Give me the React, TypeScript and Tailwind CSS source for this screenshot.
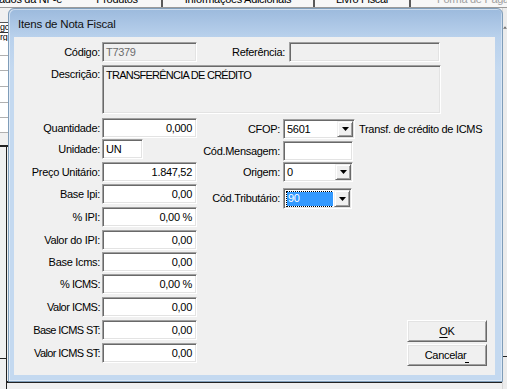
import React from "react";

const sunkenCls =
  "border border-t-[#a0a0a0] border-l-[#a0a0a0] border-r-white border-b-white shadow-[inset_1px_1px_0_#696969,inset_-1px_-1px_0_#e3e3e3]";

function Edit({
  className = "",
  children,
  right = false,
  bg = "bg-white",
}: {
  className?: string;
  children?: React.ReactNode;
  right?: boolean;
  bg?: string;
}) {
  return (
    <div
      className={`${sunkenCls} ${bg} ${className} flex items-center ${
        right ? "justify-end pr-[4px]" : "pl-[3px]"
      } whitespace-nowrap overflow-hidden`}
    >
      {children}
    </div>
  );
}

function Arrow() {
  return (
    <svg width="7" height="4" viewBox="0 0 7 4">
      <path d="M0 0H7L3.5 4Z" fill="#000" />
    </svg>
  );
}

function Combo({
  className = "",
  value,
  selected = false,
}: {
  className?: string;
  value: string;
  selected?: boolean;
}) {
  return (
    <div className={`${sunkenCls} bg-white ${className} flex p-[1px]`}>
      <div className="flex-1 flex items-center pl-[2px] overflow-hidden">
        {selected ? (
          <span className="flex-1 h-[14px] flex items-center bg-[#3399ff] text-white outline-1 outline-dotted outline-black pl-[1px]">
            {value}
          </span>
        ) : (
          <span>{value}</span>
        )}
      </div>
      <div className="w-[16px] ml-[1px] border border-t-[#f0f0f0] border-l-[#f0f0f0] border-r-[#696969] border-b-[#696969] shadow-[inset_1px_1px_0_#fff,inset_-1px_-1px_0_#a0a0a0] bg-[#f0f0f0] flex items-center justify-center">
        <Arrow />
      </div>
    </div>
  );
}

function Button({ children }: { children: React.ReactNode }) {
  return (
    <div className="w-[80px] h-[22px] bg-[#f0f0f0] border border-t-white border-l-white border-r-[#696969] border-b-[#696969] shadow-[inset_1px_1px_0_#e3e3e3,inset_-1px_-1px_0_#a0a0a0] flex items-center justify-center">
      {children}
    </div>
  );
}

const leftRows: { label: string; value: string; mt: string; w?: string; right?: boolean; ls?: string }[] = [
  { label: "Quantidade:", value: "0,000", mt: "mt-0" },
  { label: "Unidade:", value: "UN", mt: "mt-[1px]", w: "w-[41px]", right: false },
  { label: "Preço Unitário:", value: "1.847,52", mt: "mt-[3px]" },
  { label: "Base Ipi:", value: "0,00", mt: "mt-[2px]" },
  { label: "% IPI:", value: "0,00 %", mt: "mt-[3px]" },
  { label: "Valor do IPI:", value: "0,00", mt: "mt-[3px]" },
  { label: "Base Icms:", value: "0,00", mt: "mt-[2px]" },
  { label: "% ICMS:", value: "0,00 %", mt: "mt-[2px]", ls: "tracking-[-0.5px]" },
  { label: "Valor ICMS:", value: "0,00", mt: "mt-[3px]", ls: "tracking-[-0.5px]" },
  { label: "Base ICMS ST:", value: "0,00", mt: "mt-[3px]", ls: "tracking-[-0.6px]" },
  { label: "Valor ICMS ST:", value: "0,00", mt: "mt-[3px]", ls: "tracking-[-0.6px]" },
];

export default function App() {
  return (
    <div className="relative w-[507px] h-[389px] overflow-hidden bg-[#f0f0f0] font-['Liberation_Sans',Arial,sans-serif] text-[11px] tracking-[-0.3px] text-black leading-none">
      {/* background: tabs strip */}
      <div className="h-[8px] flex overflow-hidden bg-[#f7f7f7] border-b border-[#9a9a9a]">
        <div className="w-[73px] shrink-0 flex justify-end pr-[11px] -mt-[6px] whitespace-nowrap">
          Dados da NF-e
        </div>
        <div className="w-[90px] shrink-0 flex justify-center -mt-[6px] border-r-2 border-[#5a5a5a] whitespace-nowrap">
          Produtos
        </div>
        <div className="w-[152px] shrink-0 flex justify-center -mt-[6px] border-r-2 border-[#5a5a5a] whitespace-nowrap">
          Informações Adicionais
        </div>
        <div className="w-[96px] shrink-0 flex justify-center -mt-[6px] border-r-2 border-[#5a5a5a] whitespace-nowrap">
          Livro Fiscal
        </div>
        <div className="flex-1 pl-[26px] -mt-[6px] text-[#a0a0a0] whitespace-nowrap">
          Forma de Pagamento
        </div>
      </div>

      {/* background: body */}
      <div className="flex h-[381px]">
        <div className="w-[8px] shrink-0 flex flex-col overflow-hidden">
          <div className="h-[14px]" />
          <div className="h-[10px] border-t border-[#555] bg-white text-[9px] leading-[9px] overflow-hidden">gc</div>
          <div className="h-[9px] border-t border-[#333] bg-white text-[9px] leading-[8px] overflow-hidden">rg</div>
          <div className="h-[15px] border-b border-[#b0b0b0] bg-white" />
          <div className="h-[15px] border-b border-[#b0b0b0] bg-white" />
          <div className="h-[16px] border-b border-[#b0b0b0] bg-white" />
          <div className="h-[16px] border-b border-[#b0b0b0] bg-white" />
          <div className="h-[15px] border-b border-[#b0b0b0] bg-white" />
          <div className="h-[15px] border-b border-[#b0b0b0] bg-white" />
          <div className="h-[12px]" />
          <div className="flex-1 border-t-2 border-[#222] flex">
            <div className="w-[7px] border-r border-[#222] flex flex-col">
              <div className="h-[212px] border-b border-[#222]" />
            </div>
          </div>
        </div>
        <div className="flex-1" />
        <div className="w-[5px] shrink-0 bg-[#ececec] border-l border-[#d8d8d8] flex flex-col">
          <div className="h-[15px]" />
          <div className="h-[8px] flex items-center justify-center">
            <svg width="5" height="3" viewBox="0 0 5 3">
              <path d="M0 3H5L2.5 0Z" fill="#707070" />
            </svg>
          </div>
          <div className="h-[326px] border-b border-[#222]" />
        </div>
      </div>
      <div className="absolute left-[6px] right-[5px] top-[381px] h-[2px] bg-[#222]" />

      {/* dialog window */}
      <div className="absolute left-[8px] top-[8px] w-[495px] h-[374px] rounded-t-[6px] border border-[#7f9db9] bg-[linear-gradient(to_bottom,#9cbadd_0px,#b9d1ec_28px,#c4d9f0_60px,#c4d9f0_100%)] flex flex-col pl-[5px] pr-[7px] pb-[6px] shadow-[inset_1px_1px_0_rgba(255,255,255,0.5),inset_-1px_-1px_0_rgba(255,255,255,0.4)]">
        <div className="h-[28px] shrink-0 flex items-center pl-[4px] pt-[4px] text-[11.5px] tracking-[-0.2px] text-[#111]">
          Itens de Nota Fiscal
        </div>
        <div className="flex-1 bg-[#f0f0f0] flex flex-col">
          {/* Código / Referência */}
          <div className="mt-[5px] flex items-center h-[20px]">
            <div className="w-[86px] text-right">Código:</div>
            <Edit className="ml-[2px] w-[95px] h-[20px] text-[#6d6d6d]" bg="bg-[#f0f0f0]">
              T7379
            </Edit>
            <div className="w-[92px] text-right pr-[4px]">Referência:</div>
            <Edit className="w-[151px] h-[20px]" bg="bg-[#f0f0f0]" />
          </div>
          {/* Descrição */}
          <div className="mt-[3px] flex h-[49px]">
            <div className="w-[86px] text-right pt-[4px]">Descrição:</div>
            <div className={`${sunkenCls} bg-[#f0f0f0] ml-[2px] w-[339px] h-[49px] pl-[3px] pt-[4px] tracking-[-0.75px]`}>
              TRANSFERÊNCIA DE CRÉDITO
            </div>
          </div>
          {/* bottom section */}
          <div className="mt-[4px] flex flex-1 min-w-0">
            <div className="flex flex-col w-[183px] shrink-0">
              {leftRows.map((r) => (
                <div key={r.label} className={`${r.mt} flex items-center h-[20px]`}>
                  <div className={`w-[86px] text-right whitespace-nowrap ${r.ls ?? ""}`}>{r.label}</div>
                  <Edit
                    className={`ml-[2px] ${r.w ?? "w-[95px]"} h-[20px]`}
                    right={r.right ?? true}
                  >
                    {r.value}
                  </Edit>
                </div>
              ))}
            </div>
            <div className="flex flex-col flex-1 min-w-0">
              <div className="mt-[1px] flex items-center h-[20px]">
                <div className="w-[83px] shrink-0 text-right">CFOP:</div>
                <Combo className="ml-[3px] w-[72px] shrink-0 h-[20px]" value="5601" />
                <div className="ml-[4px] shrink-0 whitespace-nowrap">Transf. de crédito de ICMS</div>
              </div>
              <div className="mt-[2px] flex items-center h-[20px]">
                <div className="w-[83px] shrink-0 text-right whitespace-nowrap">Cód.Mensagem:</div>
                <Edit className="ml-[3px] w-[70px] shrink-0 h-[20px]" />
              </div>
              <div className="mt-[1px] flex items-center h-[20px]">
                <div className="w-[83px] shrink-0 text-right">Origem:</div>
                <Combo className="ml-[3px] w-[70px] shrink-0 h-[20px]" value="0" />
              </div>
              <div className="mt-[6px] flex items-center h-[21px]">
                <div className="w-[83px] shrink-0 text-right whitespace-nowrap">Cód.Tributário:</div>
                <Combo className="ml-[3px] w-[69px] shrink-0 h-[21px]" value="90" selected />
              </div>
            </div>
            <div className="w-[88px] shrink-0 flex flex-col justify-end gap-[2px] pr-[8px] pb-[9px]">
              <Button>
                <span>
                  <span className="underline underline-offset-[2px]">O</span>K
                </span>
              </Button>
              <Button>
                <span className="flex items-end">
                  Cancelar
                  <span className="inline-block w-[4px] h-[1px] bg-black -ml-[1px] mb-[-2px]" />
                </span>
              </Button>
            </div>
          </div>
        </div>
      </div>
    </div>
  );
}
